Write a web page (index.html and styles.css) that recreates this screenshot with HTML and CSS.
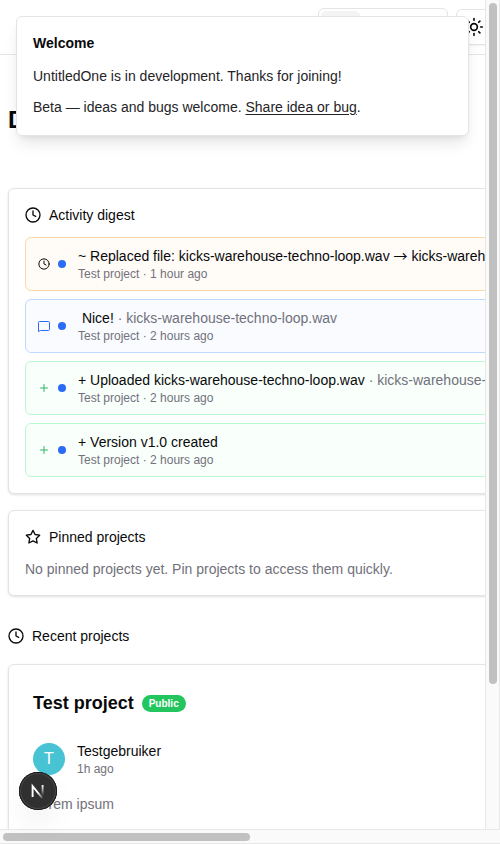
FILE: index.html
```html
<!DOCTYPE html>
<html lang="en">
<head>
<meta charset="utf-8">
<title>UntitledOne</title>
<link rel="stylesheet" href="styles.css">
</head>
<body>
<div class="window">
  <div class="view">
    <header class="topbar">
      <div class="switcher"><span class="switcher-active"></span></div>
      <button class="theme" aria-label="Theme">
        <svg class="icon-20" viewBox="0 0 24 24"><circle cx="12" cy="12" r="4"/><path d="M12 2v2M12 20v2M4.93 4.93l1.41 1.41M17.66 17.66l1.41 1.41M2 12h2M20 12h2M6.34 17.66l-1.41 1.41M19.07 4.93l-1.41 1.41"/></svg>
      </button>
    </header>
    <h1 class="page-title">D</h1>

    <section class="card">
      <h2 class="heading"><svg class="icon-16" viewBox="0 0 24 24"><circle cx="12" cy="12" r="10.5"/><path d="M12 6V12l4 2"/></svg>Activity digest</h2>
      <ul class="feed">
        <li class="entry orange">
          <svg class="icon-12" viewBox="0 0 24 24"><circle cx="12" cy="12" r="10.3"/><path d="M12 6V12l4 2"/></svg><i class="dot"></i>
          <div><p class="line">~ Replaced file: kicks-warehouse-techno-loop.wav <span class="arrow">→</span> kicks-warehouse-techno-loop.wav</p><p class="meta">Test project · 1 hour ago</p></div>
        </li>
        <li class="entry blue">
          <svg class="icon-12" viewBox="0 0 24 24"><path d="M23 19a2 2 0 0 1-2 2H5l-4 2V5a2 2 0 0 1 2-2h18a2 2 0 0 1 2 2z"/></svg><i class="dot"></i>
          <div><p class="line">&nbsp;Nice! <span class="muted">· kicks-warehouse-techno-loop.wav</span></p><p class="meta">Test project · 2 hours ago</p></div>
        </li>
        <li class="entry green">
          <svg class="icon-12" viewBox="0 0 24 24"><path d="M5 12h14M12 5v14"/></svg><i class="dot"></i>
          <div><p class="line">+ Uploaded kicks-warehouse-techno-loop.wav <span class="muted">· kicks-warehouse-techno-loop.wav</span></p><p class="meta">Test project · 2 hours ago</p></div>
        </li>
        <li class="entry green">
          <svg class="icon-12" viewBox="0 0 24 24"><path d="M5 12h14M12 5v14"/></svg><i class="dot"></i>
          <div><p class="line">+ Version v1.0 created</p><p class="meta">Test project · 2 hours ago</p></div>
        </li>
      </ul>
    </section>

    <section class="card">
      <h2 class="heading"><svg class="icon-16" viewBox="0 0 24 24"><path d="M12 2l3.09 6.26L22 9.27l-5 4.87 1.18 6.88L12 17.77l-6.18 3.25L7 14.14 2 9.27l6.91-1.01z"/></svg>Pinned projects</h2>
      <p class="empty">No pinned projects yet. Pin projects to access them quickly.</p>
    </section>

    <h2 class="heading recent"><svg class="icon-16" viewBox="0 0 24 24"><circle cx="12" cy="12" r="10.5"/><path d="M12 6V12l4 2"/></svg>Recent projects</h2>
    <article class="card project">
      <div class="project-head"><h3>Test project</h3><span class="badge">Public</span></div>
      <div class="author">
        <span class="avatar">T</span>
        <div><p class="line">Testgebruiker</p><p class="meta">1h ago</p></div>
      </div>
      <p class="description">Lorem ipsum</p>
    </article>
  </div>

  <div class="bar-y"><div class="thumb-y"></div></div>
  <div class="bar-x"><div class="thumb-x"></div></div>
</div>

<aside class="toast">
  <h2>Welcome</h2>
  <p>UntitledOne is in development. Thanks for joining!</p>
  <p>Beta — ideas and bugs welcome. <a href="#">Share idea or bug</a>.</p>
</aside>

<div class="dev">
  <svg viewBox="0 0 38 38">
    <defs>
      <linearGradient id="diag" x1="20" y1="20" x2="25" y2="27" gradientUnits="userSpaceOnUse"><stop stop-color="#fff"/><stop offset="1" stop-color="#fff" stop-opacity="0"/></linearGradient>
      <linearGradient id="stem" x1="0" y1="13" x2="0" y2="24" gradientUnits="userSpaceOnUse"><stop stop-color="#fff"/><stop offset="1" stop-color="#fff" stop-opacity="0"/></linearGradient>
    </defs>
    <path d="M13.6 25V14.2L23.2 26" stroke="url(#diag)"/>
    <path d="M23.6 13L23.61 24.5" stroke="url(#stem)"/>
  </svg>
</div>
</body>
</html>
```
FILE: styles.css
```css
* { box-sizing: border-box; }
body, h1, h2, h3, p, ul { margin: 0; padding: 0; }
body {
  font-family: "Liberation Sans", Arial, sans-serif;
  font-size: 14px;
  line-height: 20px;
  color: #09090b;
  background: #fff;
  overflow: hidden;
}
svg { flex: none; fill: none; stroke: currentColor; stroke-width: 2; stroke-linecap: round; stroke-linejoin: round; }
.icon-20 { width: 20px; height: 20px; }
.icon-16 { width: 16px; height: 16px; }
.icon-12 { width: 12px; height: 12px; }

.window {
  display: grid;
  grid-template: 829px 15px / 485px 15px;
  width: 500px;
  height: 844px;
}
.view { overflow: hidden; }

.topbar {
  display: flex;
  align-items: center;
  gap: 8px;
  width: 516px;
  height: 55px;
  padding-left: 318px;
  border-bottom: 1px solid #e4e4e7;
}
.switcher {
  width: 130px;
  height: 38px;
  padding: 2px;
  border: 1px solid #e4e4e7;
  border-radius: 6px;
}
.switcher-active { display: block; width: 39px; height: 32px; border-radius: 5px; background: #f4f4f5; }
.theme {
  display: flex;
  align-items: center;
  justify-content: center;
  width: 36px;
  height: 36px;
  padding: 0;
  color: #09090b;
  background: #fff;
  border: 1px solid #e4e4e7;
  border-radius: 6px;
  box-shadow: 0 1px 2px rgba(0, 0, 0, .05);
}
.page-title { margin: 49px 0 52px 8px; font-size: 24px; line-height: 32px; }

.card {
  width: 600px;
  margin: 0 0 16px 8px;
  padding: 16px;
  border: 1px solid #e4e4e7;
  border-radius: 6px;
  background: #fff;
  box-shadow: 0 1px 3px rgba(0, 0, 0, .1), 0 1px 2px -1px rgba(0, 0, 0, .1);
}
.heading { display: flex; align-items: center; gap: 8px; font-size: 14px; font-weight: 400; }
.feed { display: grid; gap: 8px; margin-top: 12px; list-style: none; }
.entry {
  display: flex;
  align-items: center;
  height: 54px;
  padding: 0 12px;
  border: 1px solid;
  border-radius: 6px;
  white-space: nowrap;
}
.entry svg { margin-right: 8px; }
.arrow { display: inline-flex; justify-content: center; width: 14px; height: 16px; font-family: "Noto Sans CJK SC", sans-serif; line-height: 16px; }
.dot { flex: none; width: 8px; height: 8px; margin-right: 12px; border-radius: 50%; background: #2b6cf6; }
.orange { border-color: #ffd6a7; background: #fffcf8; }
.blue { border-color: #bedbff; background: #f9fbff; }
.green { border-color: #b9f8cf; background: #f9fffb; }
.blue svg { color: #2b6cf6; }
.green svg { color: #35b566; }
.line { height: 20px; color: #09090b; }
.meta { font-size: 12px; line-height: 16px; color: #71717b; }
.muted, .empty, .description { color: #71717b; }
.empty { margin-top: 12px; }

.recent { margin: 30px 0 18px 8px; }
.project { height: 260px; padding: 24px; }
.project-head { display: flex; align-items: center; gap: 8px; height: 28px; }
.project-head h3 { font-size: 18px; line-height: 28px; }
.badge {
  height: 17px;
  margin-top: 1px;
  padding: 0 7px;
  border-radius: 9px;
  background: #22c55e;
  color: #fff;
  font-size: 10px;
  font-weight: 700;
  line-height: 17px;
}
.author { display: flex; align-items: center; gap: 12px; margin-top: 24px; }
.avatar {
  width: 32px;
  height: 32px;
  border-radius: 50%;
  background: #47c3d3;
  color: #fff;
  font-size: 16px;
  line-height: 32px;
  text-align: center;
}
.description { margin-top: 17px; }

.bar-y { padding: 3px 2px 0 3px; border: solid #e8e8e8; border-width: 0 1px; background: #fafafa; }
.thumb-y { width: 8px; height: 681px; border-radius: 4px; background: #c1c1c1; }
.bar-x { grid-column: 1 / 3; padding: 3px 0 0 3px; border: solid #e8e8e8; border-width: 1px 0; background: #fafafa; }
.thumb-x { width: 247px; height: 8px; border-radius: 4px; background: #c1c1c1; }

.toast {
  position: absolute;
  top: 16px;
  left: 16px;
  width: 453px;
  height: 120px;
  padding: 16px;
  border: 1px solid #e4e4e7;
  border-radius: 6px;
  background: #fff;
  box-shadow: 0 10px 15px -3px rgba(0, 0, 0, .1), 0 4px 6px -4px rgba(0, 0, 0, .1);
  clip-path: inset(-16px -16px -40px -16px);
}
.toast h2 { margin-bottom: 12px; font-size: 14px; line-height: 20px; }
.toast p { margin-bottom: 8px; line-height: 22.75px; color: #242427; }
.toast a { color: #242427; text-decoration: underline; text-underline-offset: 2px; }

.dev {
  position: absolute;
  top: 772px;
  left: 19px;
  width: 38px;
  height: 38px;
  border-radius: 50%;
  background: #303030;
  box-shadow: inset 0 0 0 1px #171717, inset 0 0 0 2px #4a4a4a, 0 16px 32px -8px rgba(0, 0, 0, .14);
}
.dev svg { display: block; width: 38px; height: 38px; stroke-width: 1.9; stroke-linecap: butt; stroke-linejoin: miter; }
```
